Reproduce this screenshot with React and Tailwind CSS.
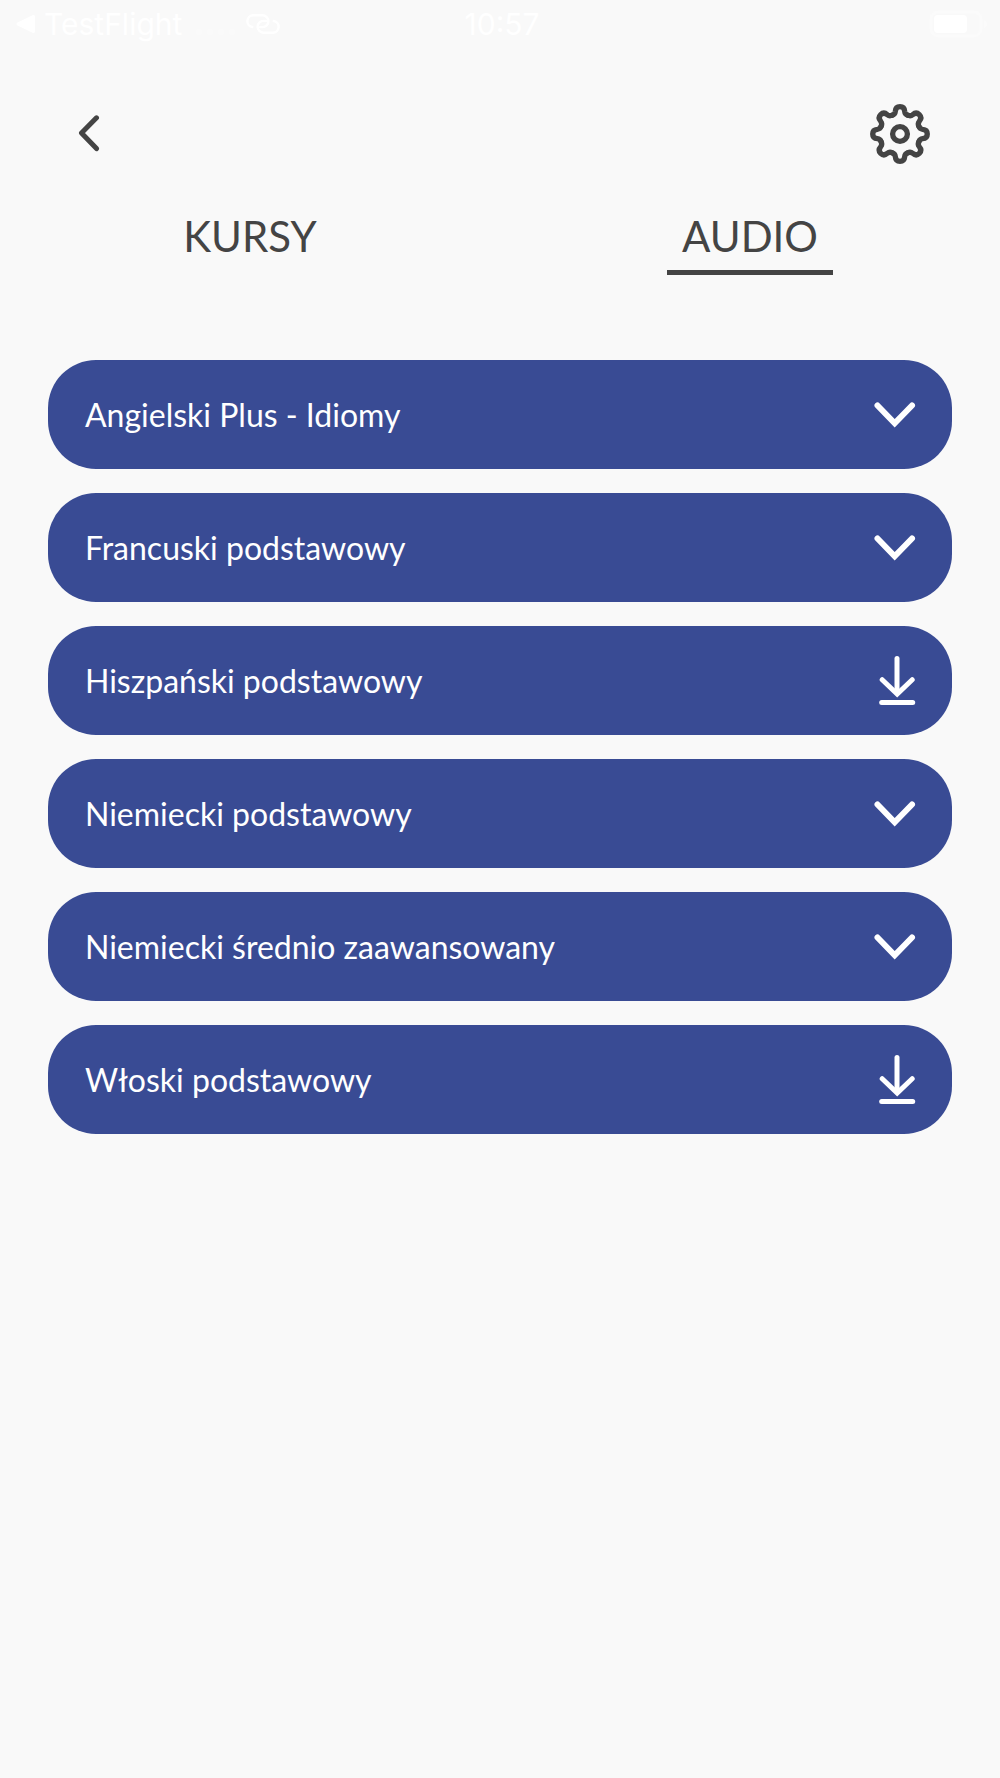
import React, { useState } from 'react';

const TABS = ['KURSY', 'AUDIO'];

const COURSES = [
    { name: 'Angielski Plus - Idiomy', downloaded: true },
    { name: 'Francuski podstawowy', downloaded: true },
    { name: 'Hiszpański podstawowy', downloaded: false },
    { name: 'Niemiecki podstawowy', downloaded: true },
    { name: 'Niemiecki średnio zaawansowany', downloaded: true },
    { name: 'Włoski podstawowy', downloaded: false },
];

const TOOTH_ANGLES = [0, 45, 90, 135, 180, 225, 270, 315];

const BackIcon = () => (
    <svg width="24" height="38" viewBox="0 0 24 38" fill="none" stroke="currentColor" strokeWidth="5" strokeLinecap="round" strokeLinejoin="round">
        <path d="M19.5 2.8 4.5 18l15 15.6" />
    </svg>
);

// Every tooth is the same curve, rotated around the centre
const GearIcon = () => (
    <svg width="60" height="60" viewBox="-30 -30 60 60" fill="none" stroke="currentColor" strokeWidth="5.3" strokeLinecap="round">
        {TOOTH_ANGLES.map((angle) => (
            <path
                key={angle}
                transform={`rotate(${angle})`}
                d="M-7.8-18.8C-5.9-19.5-4.9-20.5-4.7-22.6C-4.5-25.4-3-27.3 0-27.3C3-27.3 4.5-25.4 4.7-22.6C4.9-20.5 5.9-19.5 7.8-18.8"
            />
        ))}
        <circle r="7.4" />
    </svg>
);

const ChevronDownIcon = () => (
    <svg width="42" height="26" viewBox="0 0 42 26" fill="none" stroke="currentColor" strokeWidth="6" strokeLinecap="round">
        <path d="M3.5 3.5 20.7 21.3 38 3.5" />
    </svg>
);

const DownloadIcon = () => (
    <svg width="37" height="50" viewBox="0 0 37 50" fill="none" stroke="currentColor" strokeWidth="5" strokeLinecap="round">
        <path d="M18 2.5V36" />
        <path d="M3.2 23.7 18.2 38 33.2 23.7" />
        <path d="M2.700 46.500h31" />
    </svg>
);

const StatusBar = () => (
    <div className="grid grid-cols-3 items-center h-12 pl-4 pr-3 font-[Inter,sans-serif] text-[30px] leading-8 text-white">
        <div className="flex items-center">
            <svg width="20" height="20" viewBox="0 0 20 20" fill="currentColor">
                <path d="M1.5 8.6 16.5 1.2Q19 .3 19 3v14q0 2.7-2.5 1.8L1.5 11.4Q-.5 10 1.5 8.6Z" />
            </svg>
            <span className="ml-2">TestFlight</span>
            <svg className="ml-3 mt-4" width="44" height="8" viewBox="0 0 44 8" fill="currentColor" opacity="0.3">
                <circle cx="5" cy="4" r="3" />
                <circle cx="16" cy="4" r="3" />
                <circle cx="27" cy="4" r="3" />
                <circle cx="38" cy="4" r="3" />
            </svg>
            <svg className="ml-2" width="34" height="20" viewBox="0 0 34 20" fill="none" stroke="currentColor" strokeWidth="2.4" strokeLinecap="round">
                <path d="M6.2 13A5.9 5.9 0 0 1 7.2 1.3h9.3a5.9 5.9 0 0 1 0 11.8h-2.5" />
                <path d="M27.8 7A5.9 5.9 0 0 1 26.8 18.7H17.5a5.9 5.9 0 0 1 0-11.8H20" />
            </svg>
        </div>
        <div className="text-center">10:57</div>
        <div className="flex justify-end">
            <svg width="60" height="28" viewBox="0 0 60 28" fill="none">
                <rect x="3" y="2" width="50" height="24" rx="7" stroke="white" strokeWidth="3" opacity="0.3" />
                <rect x="6" y="5" width="33" height="18" rx="4" fill="white" />
                <path d="M56 10q3 1 3 4t-3 4Z" fill="white" opacity="0.4" />
            </svg>
        </div>
    </div>
);

const CourseRow = ({ name, downloaded }) => (
    <li>
        <button
            type="button"
            className="w-full h-[109px] pl-[37px] pr-9 flex items-center justify-between rounded-[48px] bg-[#394b94] text-white text-[32px] leading-10 text-left"
        >
            <span>{name}</span>
            {downloaded ? <ChevronDownIcon /> : <DownloadIcon />}
        </button>
    </li>
);

const App = () => {
    const [activeTab, setActiveTab] = useState('AUDIO');

    return (
        <div className="min-h-screen bg-[#f9f9f9] text-[#444444] font-[Lato,sans-serif]">
            <StatusBar />

            <header className="flex items-center justify-between pt-14 pl-[77px] pr-[70px]">
                <button type="button" aria-label="Wstecz">
                    <BackIcon />
                </button>
                <button type="button" aria-label="Ustawienia">
                    <GearIcon />
                </button>
            </header>

            <nav className="grid grid-cols-2 mt-[46px]">
                {TABS.map((tab) => (
                    <button
                        key={tab}
                        type="button"
                        onClick={() => setActiveTab(tab)}
                        className="flex flex-col items-center text-[42px] leading-[52px]"
                    >
                        <span>{tab}</span>
                        <span className={tab === activeTab ? 'mt-2 w-1/3 h-[5px] bg-[#444444]' : 'mt-2 w-1/3 h-[5px]'} />
                    </button>
                ))}
            </nav>

            <ul className="flex flex-col gap-6 px-12 pt-[85px] pb-12">
                {COURSES.map((course) => (
                    <CourseRow key={course.name} {...course} />
                ))}
            </ul>
        </div>
    );
};

export default App;
